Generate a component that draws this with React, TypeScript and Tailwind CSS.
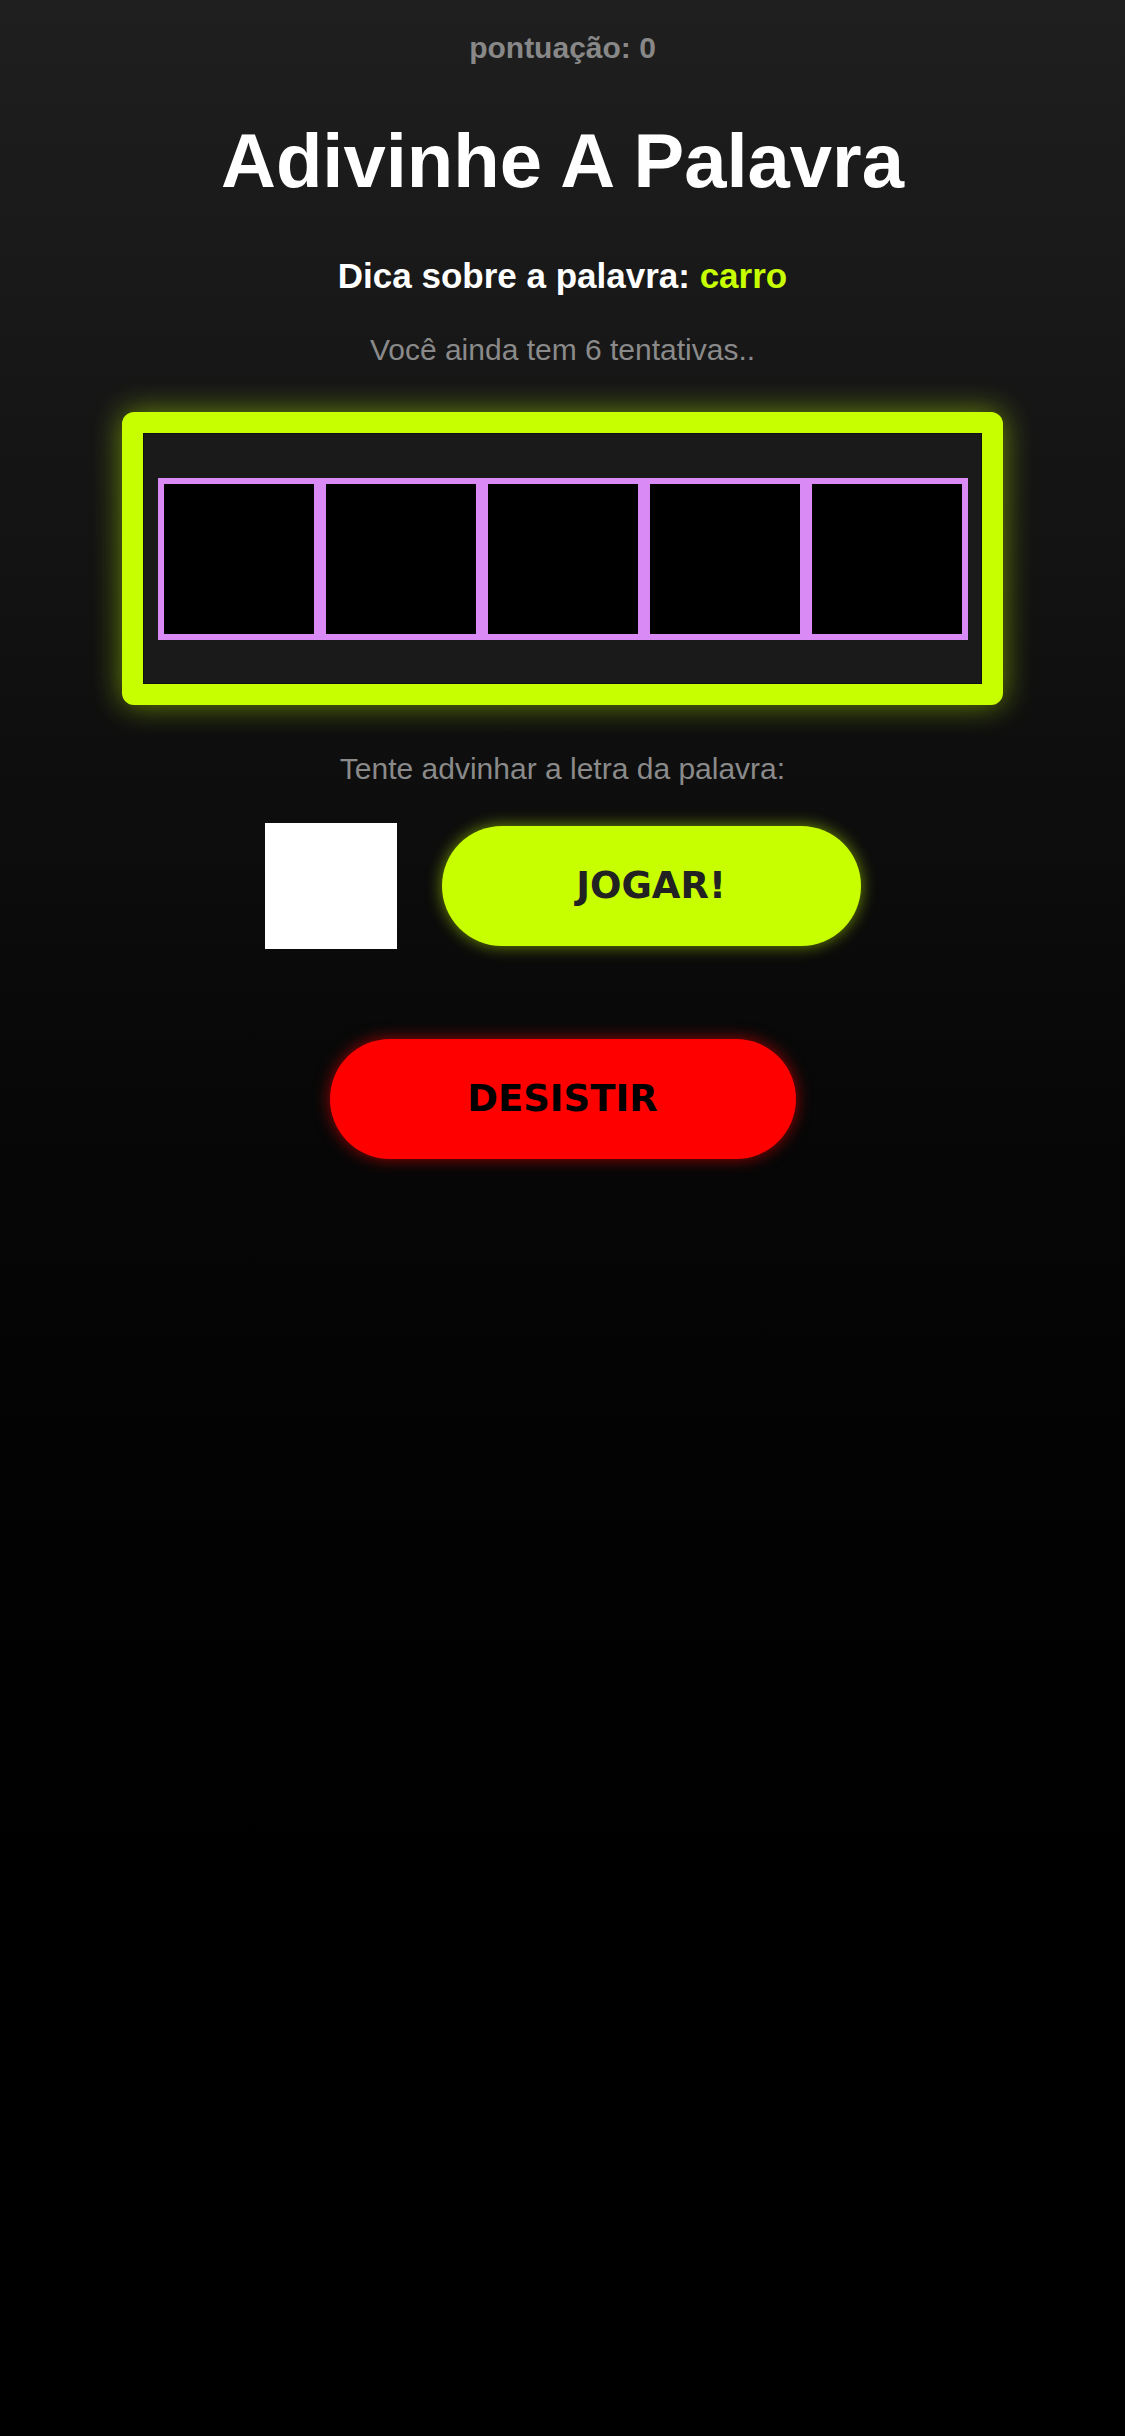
import { useState } from "react"

const WORD_LENGTH = 5

export default function App() {
  const [letter, setLetter] = useState("")

  return (
    <div className="min-h-screen w-full bg-gradient-to-b from-[#1f1f1f] to-black flex flex-col items-center pt-[31px] font-['Liberation_Sans',Arial,sans-serif]">
      <p className="text-[30px] leading-[normal] font-bold text-[#888]">pontuação: 0</p>

      <h1 className="mt-[52px] text-[76px] leading-[normal] font-bold text-white">Adivinhe A Palavra</h1>

      <p className="mt-[52px] text-[35px] leading-[normal] font-bold text-white">
        Dica sobre a palavra: <span className="text-[#c8ff00]">carro</span>
      </p>

      <p className="mt-[37px] text-[30px] leading-[normal] text-[#8a8a8a]">Você ainda tem 6 tentativas..</p>

      {/* Word board */}
      <div className="mt-[45px] w-[881px] h-[293px] rounded-[12px] border-[21px] border-[#c8ff00] bg-[#1a1a1a] shadow-[0_0_30px_rgba(200,255,0,0.5),inset_0_0_0_1px_rgba(0,0,0,0.35)] flex items-center justify-center">
        <div className="flex">
          {Array.from({ length: WORD_LENGTH }).map((_, i) => (
            <div key={i} className="w-[162px] h-[162px] border-[6px] border-[#d98af5] bg-black" />
          ))}
        </div>
      </div>

      <p className="mt-[47px] text-[30px] leading-[normal] text-[#8a8a8a]">Tente advinhar a letra da palavra:</p>

      <div className="mt-[37px] flex items-center gap-[45px]">
        <input
          value={letter}
          maxLength={1}
          onChange={(e) => setLetter(e.target.value)}
          className="w-[132px] h-[126px] bg-white border-0 outline-none text-center text-[48px] text-black"
        />
        <button className="w-[419px] h-[120px] rounded-full bg-[#c8ff00] shadow-[0_0_16px_rgba(200,255,0,0.55)] text-[37px] font-bold text-[#222] font-['DejaVu_Sans',Verdana,sans-serif]">
          JOGAR!
        </button>
      </div>

      <button className="mt-[90px] w-[466px] h-[120px] rounded-full bg-[#ff0000] shadow-[0_0_16px_rgba(255,0,0,0.6)] text-[37px] font-bold text-black font-['DejaVu_Sans',Verdana,sans-serif]">
        DESISTIR
      </button>
    </div>
  )
}
